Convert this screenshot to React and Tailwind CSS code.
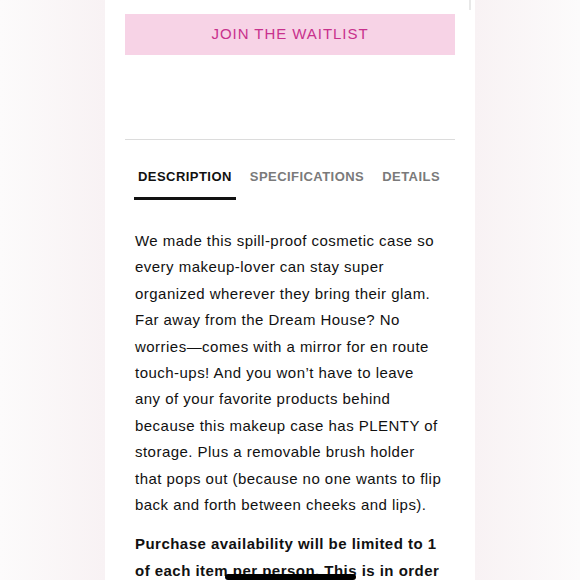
import React from "react";

const font = { fontFamily: '"Liberation Sans", Arial, Helvetica, sans-serif' };

export default function App() {
  return (
    <div
      className="relative w-[580px] h-[580px] overflow-hidden flex justify-center bg-[linear-gradient(90deg,#fcfbfb_0%,#f8f2f4_18%,#f8f2f4_82%,#fcfbfb_100%)]"
      style={font}
    >
      <div className="relative w-[370px] h-full bg-white px-[20px] pt-[14px]">
        <div className="absolute right-[4px] top-0 w-[2px] h-[10px] bg-[#e8e8e8]" />
        <div className="h-[41px] bg-[#f7d3e6] flex items-center justify-center">
          <span className="text-[15px] tracking-[0.95px] text-[#c8318d]">JOIN THE WAITLIST</span>
        </div>
        <div className="mt-[84px] h-px bg-[#dcdcdc]" />
        <div className="flex pl-[9px] gap-[10px] mt-[24px]">
          <div className="px-[4px] pb-[9px] border-b-[3px] border-[#111]">
            <span className="text-[13px] font-bold tracking-[0.45px] text-[#111]">DESCRIPTION</span>
          </div>
          <div className="px-[4px] pb-[9px]">
            <span className="text-[13px] font-bold tracking-[0.45px] text-[#7a7a7a]">SPECIFICATIONS</span>
          </div>
          <div className="px-[4px] pb-[9px]">
            <span className="text-[13px] font-bold tracking-[0.45px] text-[#7a7a7a]">DETAILS</span>
          </div>
        </div>
        <div className="pl-[10px] w-[318px] pt-[28px] text-[15px] leading-[26.4px] tracking-[0.47px] text-[#111]">
          <p>
            We made this spill-proof cosmetic case so every makeup-lover can stay super organized wherever they bring their glam. Far away from the Dream House? No worries—comes with a mirror for en route touch-ups! And you won’t have to leave any of your favorite products behind because this makeup case has PLENTY of storage. Plus a removable brush holder that pops out (because no one wants to flip back and forth between cheeks and lips).
          </p>
          <p className="mt-[13px] font-bold">
            Purchase availability will be limited to 1 of each item per person. This is in order to give everyone a chance.
          </p>
        </div>
      </div>
      <div className="absolute left-[225px] top-[574px] w-[131px] h-[6px] rounded-full bg-black" />
    </div>
  );
}
